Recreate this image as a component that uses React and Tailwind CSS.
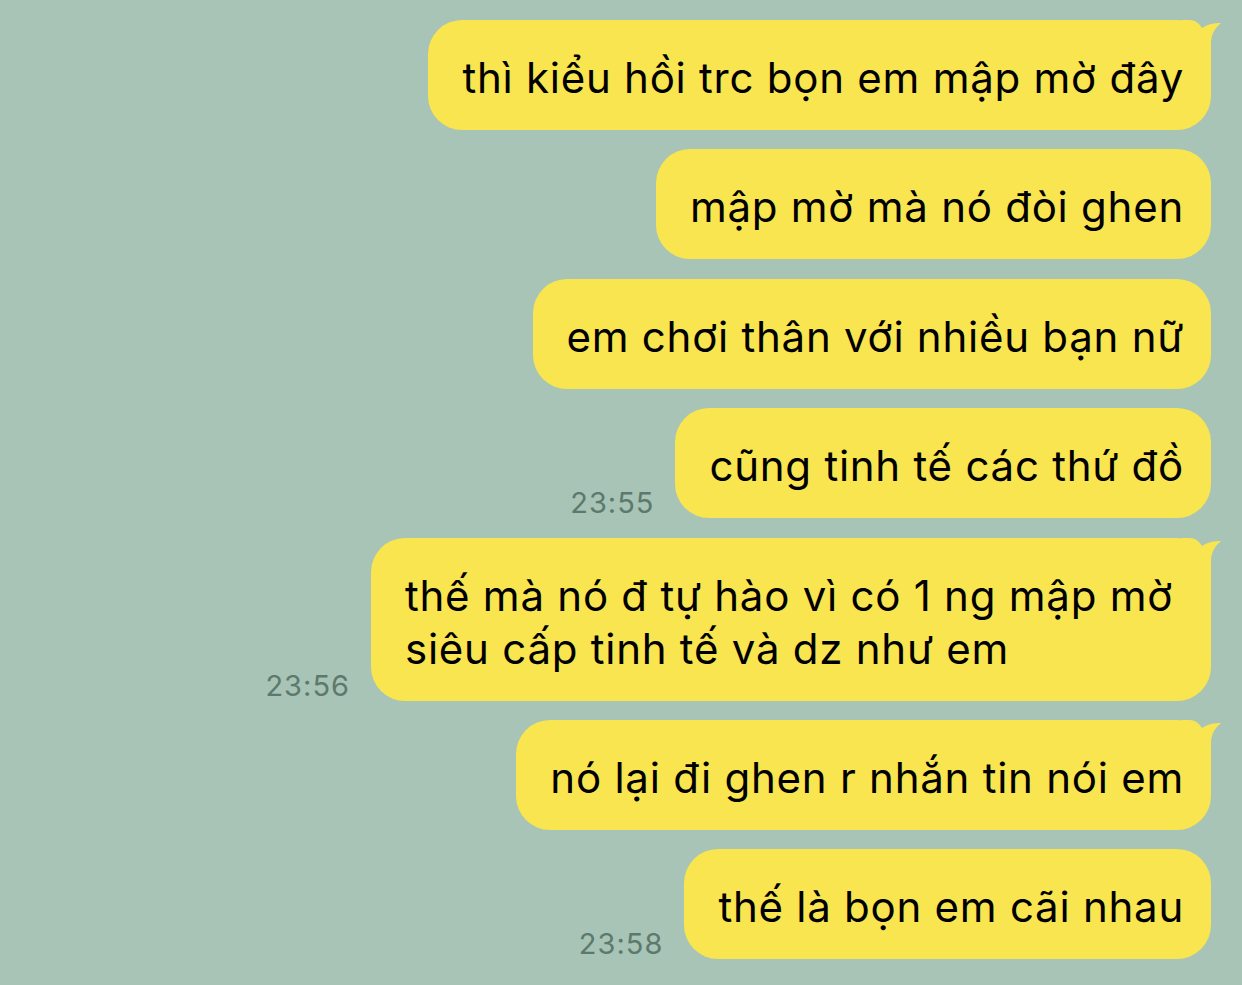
import React from "react";

const messages = [
  { lines: ["thì kiểu hồi trc bọn em mập mờ đây"], tail: true },
  { lines: ["mập mờ mà nó đòi ghen"] },
  { lines: ["em chơi thân với nhiều bạn nữ"] },
  { lines: ["cũng tinh tế các thứ đồ"], time: "23:55" },
  {
    lines: ["thế mà nó đ tự hào vì có 1 ng mập mờ", "siêu cấp tinh tế và dz như em"],
    tail: true,
    time: "23:56",
    wide: true,
  },
  { lines: ["nó lại đi ghen r nhắn tin nói em"], tail: true },
  { lines: ["thế là bọn em cãi nhau"], time: "23:58" },
];

function Tail() {
  return (
    <svg
      className="absolute top-0 right-[-10px]"
      width="40"
      height="40"
      viewBox="0 0 40 40"
    >
      <path
        d="M0,0 H8 C16,0 19,5 21,8 C27,4 33,3 40,3 C34,8 30,14 30,24 V40 H0 Z"
        fill="#f8e54f"
      />
    </svg>
  );
}

function Row({ m }) {
  return (
    <div className="flex justify-end items-end gap-[21px]">
      {m.time && (
        <div
          className="text-[29px] leading-none tracking-[1px] text-[#5d796d] mb-[1px]"
          style={{ fontFamily: "Inter, 'Noto Sans', sans-serif" }}
        >
          {m.time}
        </div>
      )}
      <div
        className={
          "relative bg-[#f8e54f] rounded-[34px] pl-[34px] pr-[27px] pt-[31px] pb-[26px] text-[42px] tracking-[0.75px] leading-[53px] text-black whitespace-nowrap " +
          (m.wide ? "w-[840px]" : "")
        }
        style={{ fontFamily: "Inter, 'Noto Sans', sans-serif" }}
      >
        {m.tail && <Tail />}
        {m.lines.map((l, i) => (
          <div key={i}>{l}</div>
        ))}
      </div>
    </div>
  );
}

export default function App() {
  return (
    <div className="w-[1242px] h-[985px] bg-[#a7c4b6] overflow-hidden">
      <div className="flex flex-col gap-[19.4px] pt-[20px] pr-[31px]">
        {messages.map((m, i) => (
          <Row key={i} m={m} />
        ))}
      </div>
    </div>
  );
}
